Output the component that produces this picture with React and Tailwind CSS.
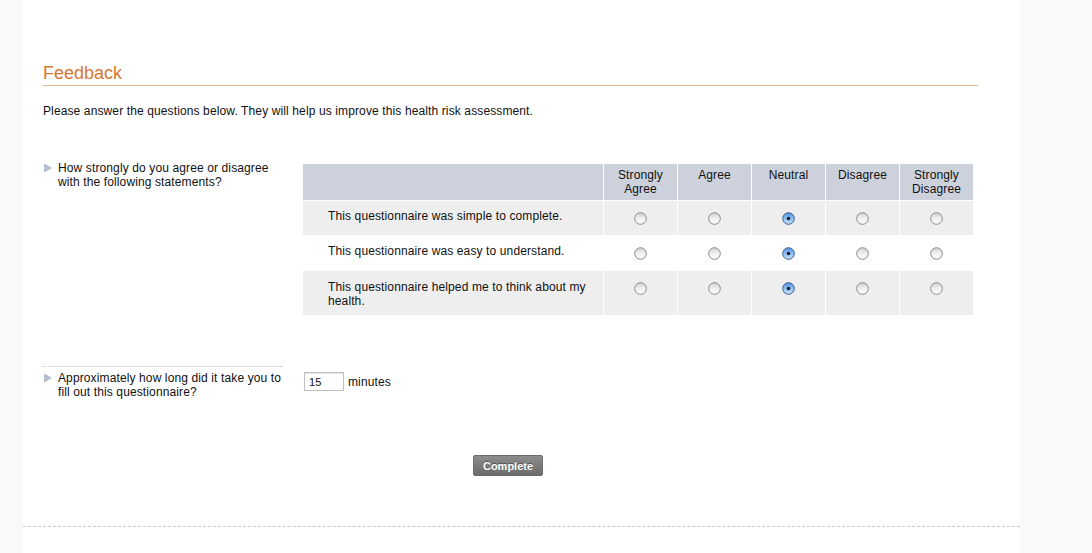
import React from "react";

function Radio({ checked }) {
  return (
    <svg width="13" height="13" viewBox="0 0 13 13" className="block">
      <defs>
        <linearGradient id="rg-off" x1="0" y1="0" x2="0" y2="1">
          <stop offset="0" stopColor="#cfcfcf" />
          <stop offset="0.5" stopColor="#f0f0f0" />
          <stop offset="1" stopColor="#ffffff" />
        </linearGradient>
        <linearGradient id="rg-on" x1="0" y1="0" x2="0" y2="1">
          <stop offset="0" stopColor="#4f8ee0" />
          <stop offset="0.5" stopColor="#8fc0f2" />
          <stop offset="1" stopColor="#c6e2fb" />
        </linearGradient>
      </defs>
      <circle
        cx="6.5"
        cy="6.5"
        r="5.8"
        fill={checked ? "url(#rg-on)" : "url(#rg-off)"}
        stroke={checked ? "#3b5f93" : "#888888"}
        strokeWidth="1"
      />
      {checked && <circle cx="6.5" cy="6.5" r="1.8" fill="#1b2233" />}
    </svg>
  );
}

function Bullet() {
  return (
    <svg width="8" height="10" viewBox="0 0 8 10" className="mt-[2px] shrink-0">
      <path d="M1 0.8 L7.2 4.4 Q8 5 7.2 5.6 L1 9.2 Q0 9.6 0 8.6 L0 1.4 Q0 0.4 1 0.8 Z" fill="#b7bfcd" />
    </svg>
  );
}

const cols = [
  ["Strongly", "Agree"],
  ["Agree"],
  ["Neutral"],
  ["Disagree"],
  ["Strongly", "Disagree"],
];

const rows = [
  { text: "This questionnaire was simple to complete.", bg: "bg-[#eeeeee]", pad: "pt-[8px] pb-[8px]" },
  { text: "This questionnaire was easy to understand.", bg: "bg-white", pad: "pt-[8px] pb-[8px]" },
  { text: "This questionnaire helped me to think about my health.", bg: "bg-[#eeeeee]", pad: "pt-[9px] pb-[7px]" },
];

export default function App() {
  return (
    <div className="min-h-screen bg-[#f9f9f9] font-['Liberation_Sans',Arial,sans-serif] text-[12px] leading-[14px] tracking-[0.12px] text-[#111]">
      <div className="ml-[23px] w-[997px] min-h-[553px] bg-white">
        <div className="pl-[20px] pr-[42px] pt-[62px]">
          <h1 className="border-b border-[#e2b792] pb-[1px] text-[18px] leading-[22px] font-normal tracking-normal text-[#d9782f]">
            Feedback
          </h1>
          <p className="mt-[18px]">
            Please answer the questions below. They will help us improve this health risk assessment.
          </p>

          <div className="mt-[43px] flex">
            <div className="flex w-[240px] gap-[6px] pl-[1px]">
              <Bullet />
              <div className="w-[226px]">How strongly do you agree or disagree with the following statements?</div>
            </div>
            <div className="ml-[20px] mt-[3px] grid grid-cols-[300px_repeat(5,73px)] gap-px bg-white">
              <div className="h-[36px] bg-[#cdd1dc]" />
              {cols.map((c, i) => (
                <div key={i} className="h-[36px] bg-[#cdd1dc] pt-[4px] text-center">
                  {c.map((l, j) => (
                    <div key={j}>{l}</div>
                  ))}
                </div>
              ))}
              {rows.map((r, ri) => (
                <React.Fragment key={ri}>
                  <div className={`${r.bg} ${r.pad} pl-[25px] pr-[12px]`}>{r.text}</div>
                  {cols.map((_, ci) => (
                    <div key={ci} className={`${r.bg} flex justify-center pt-[11px] pb-[10px]`}>
                      <Radio checked={ci === 2} />
                    </div>
                  ))}
                </React.Fragment>
              ))}
            </div>
          </div>

          <div className="mt-[51px] flex">
            <div className="flex w-[240px] gap-[6px] border-t border-dotted border-[#c4c4c4] pl-[1px] pt-[4px]">
              <Bullet />
              <div className="w-[226px]">Approximately how long did it take you to fill out this questionnaire?</div>
            </div>
            <div className="ml-[21px] flex items-center pt-[6px] self-start">
              <div className="flex h-[19px] w-[40px] items-center border border-[#c0c0c0] bg-white pl-[4px] text-[11px] shadow-[inset_0_1px_1px_rgba(0,0,0,0.12)]">
                15
              </div>
              <span className="ml-[4px]">minutes</span>
            </div>
          </div>

          <div className="mt-[56px] flex justify-center pr-[5px]">
            <button className="h-[21px] w-[70px] rounded-[2px] border border-[#6a6a6a] bg-gradient-to-b from-[#8c8c8c] to-[#6c6c6c] text-[11px] font-bold tracking-normal text-white [text-shadow:0_-1px_0_rgba(0,0,0,0.4)]">
              Complete
            </button>
          </div>
        </div>
        <div className="mt-[50px] border-t border-dashed border-[#c8c8c8]" />
      </div>
    </div>
  );
}
